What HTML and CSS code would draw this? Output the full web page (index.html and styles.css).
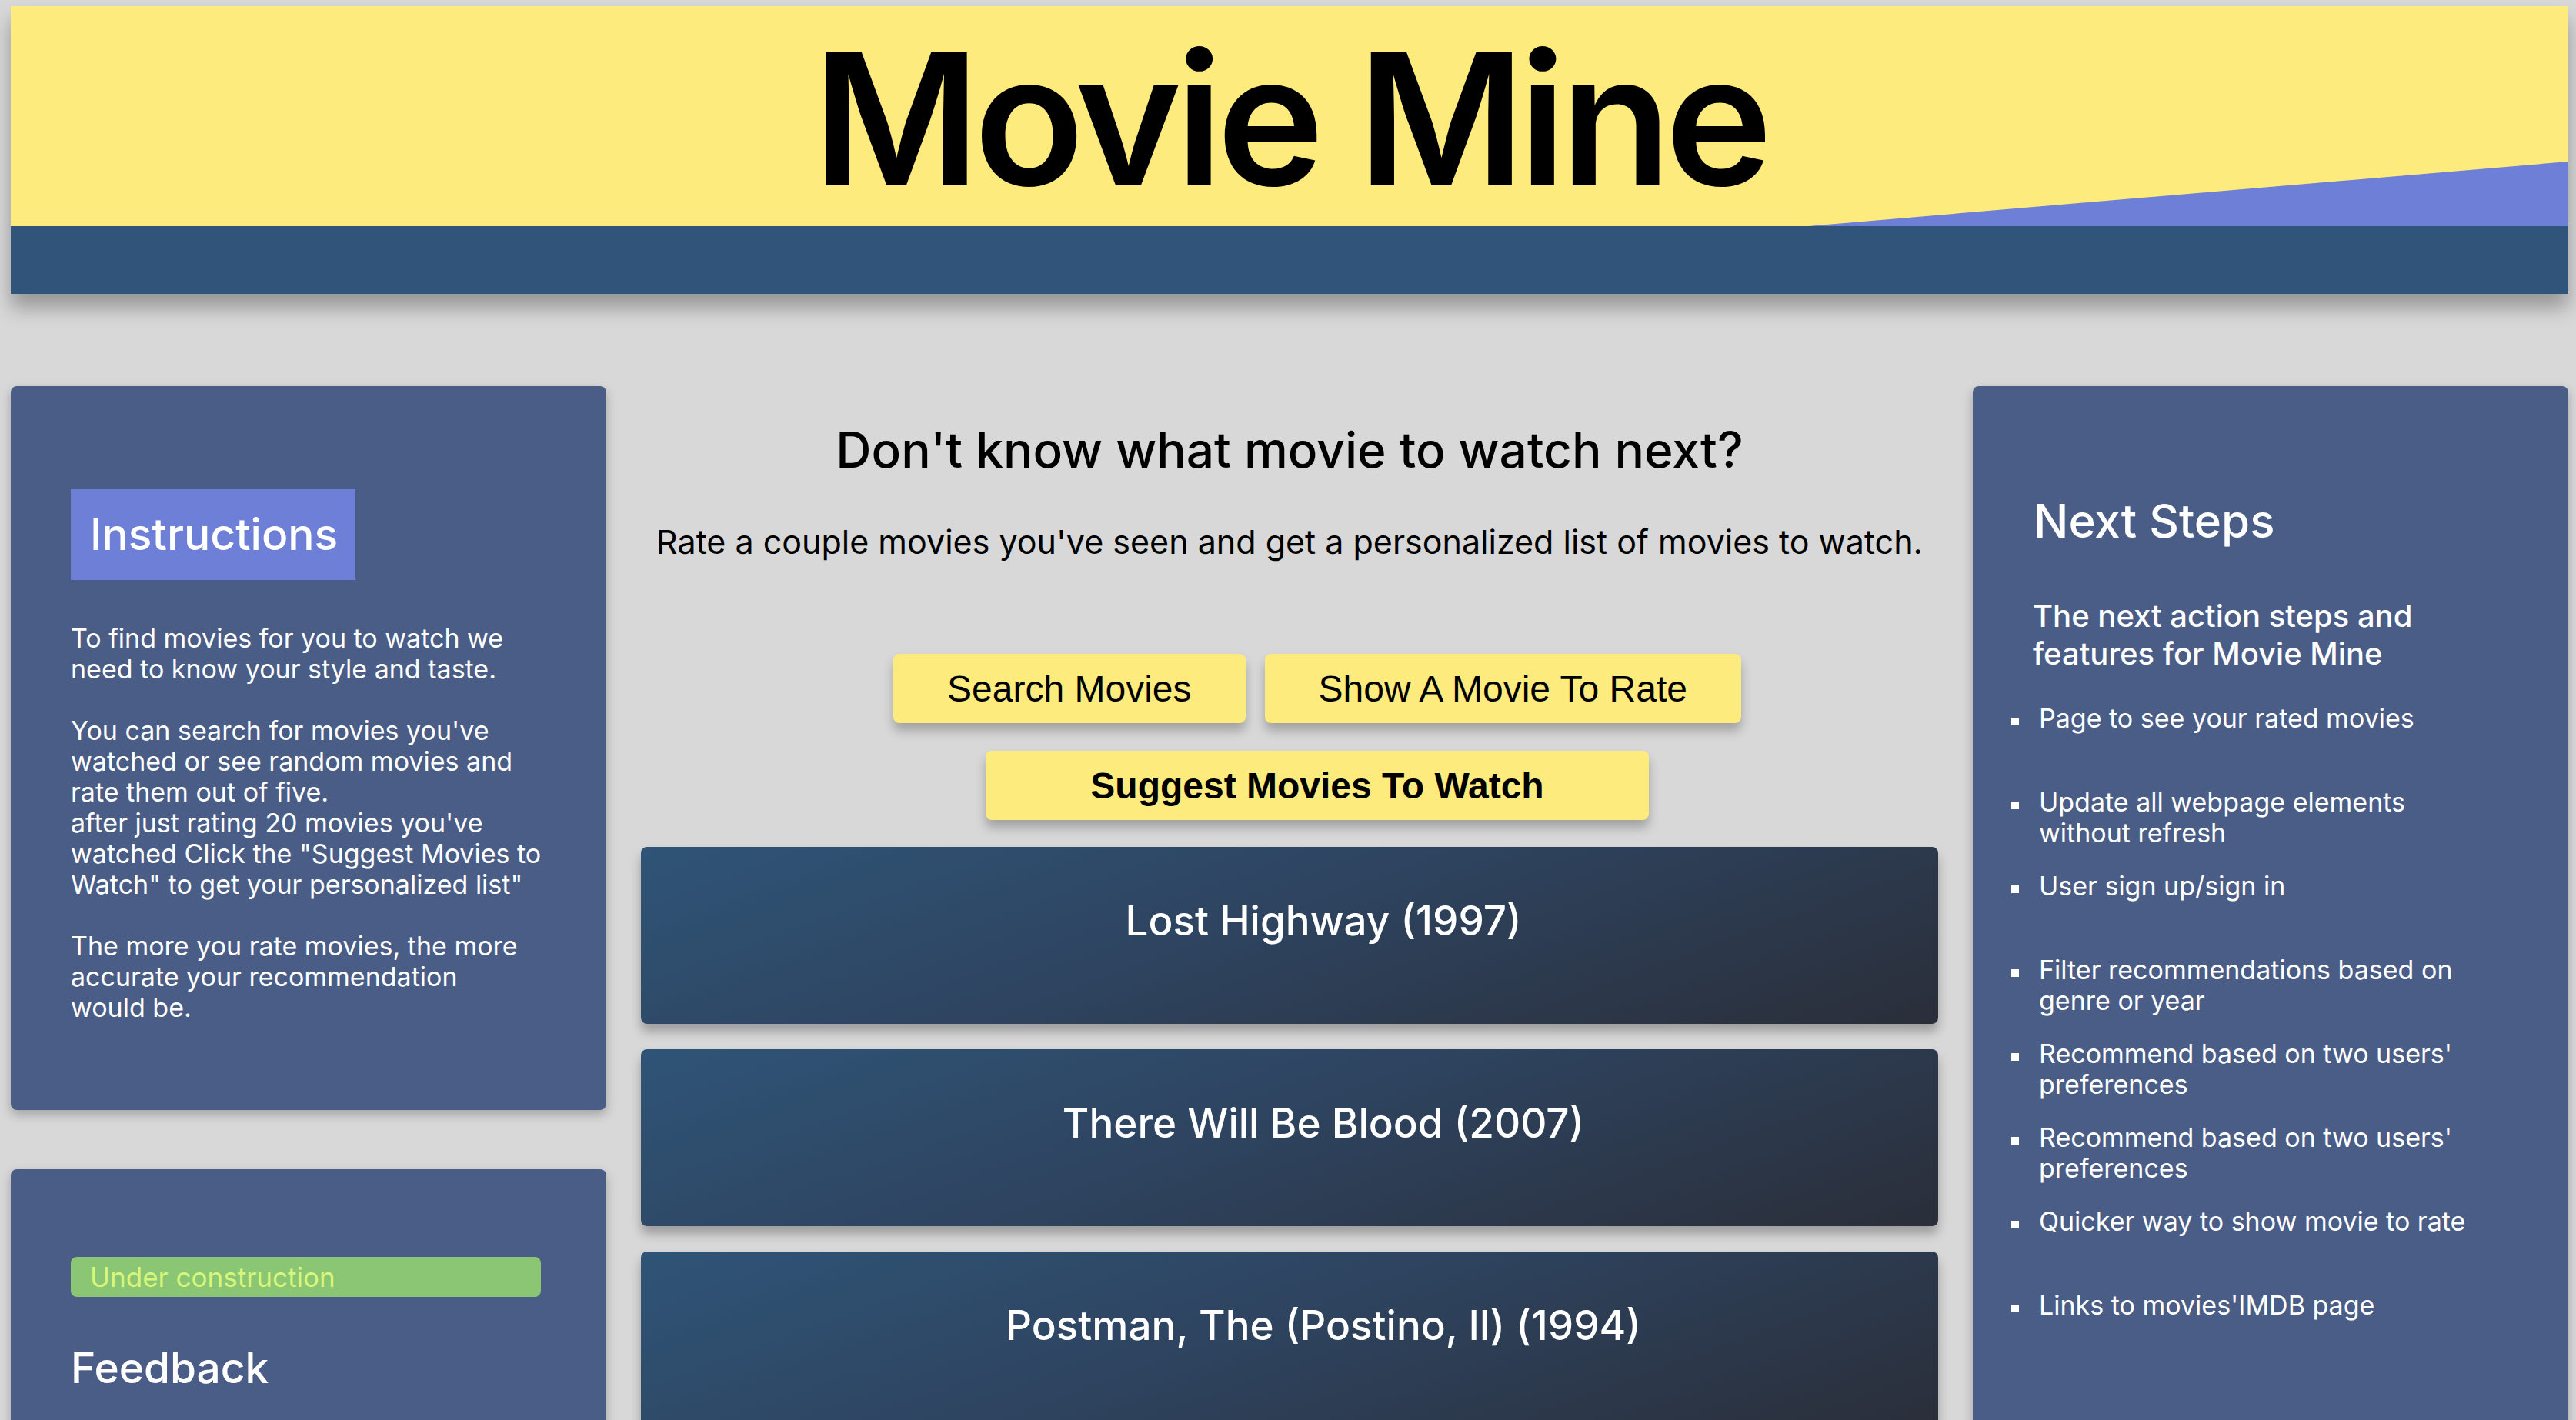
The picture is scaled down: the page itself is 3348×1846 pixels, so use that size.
FILE: index.html
```html
<!DOCTYPE html>
<html lang="en">
<head>
<meta charset="utf-8">
<title>Movie Mine</title>
<link rel="stylesheet" href="styles.css">
</head>
<body>
<div class="page">
  <header class="hero">
    <div class="hero-top">
      <h1 class="hero-title">Movie Mine</h1>
      <div class="hero-wedge"></div>
    </div>
    <div class="hero-band"></div>
  </header>

  <main class="layout">
    <aside class="side">
      <section class="card card-instructions">
        <h2 class="tag">Instructions</h2>
        <p class="card-text">To find movies for you to watch we need to know your style and taste.<br><br>You can search for movies you've watched or see random movies and rate them out of five.<br>after just rating 20 movies you've watched Click the "Suggest Movies to Watch" to get your personalized list"<br><br>The more you rate movies, the more accurate your recommendation<br>would be.</p>
      </section>
      <section class="card card-feedback">
        <div class="notice">Under construction</div>
        <h2 class="card-title">Feedback</h2>
      </section>
    </aside>

    <section class="center">
      <h2 class="lead-title">Don't know what movie to watch next?</h2>
      <p class="lead-text">Rate a couple movies you've seen and get a personalized list of movies to watch.</p>
      <div class="actions">
        <div class="action-row">
          <button class="btn">Search Movies</button>
          <button class="btn">Show A Movie To Rate</button>
        </div>
        <div class="action-row">
          <button class="btn btn-strong">Suggest Movies To Watch</button>
        </div>
      </div>
      <div class="movies">
        <div class="movie">Lost Highway (1997)</div>
        <div class="movie">There Will Be Blood (2007)</div>
        <div class="movie">Postman, The (Postino, Il) (1994)</div>
      </div>
    </section>

    <aside class="side">
      <section class="card card-steps">
        <h2 class="card-title steps-title">Next Steps</h2>
        <h3 class="steps-sub">The next action steps and features for Movie Mine</h3>
        <ul class="steps">
          <li>Page to see your rated movies</li>
          <li>Update all webpage elements without refresh</li>
          <li>User sign up/sign in</li>
          <li>Filter recommendations based on genre or year</li>
          <li>Recommend based on two users' preferences</li>
          <li>Recommend based on two users' preferences</li>
          <li>Quicker way to show movie to rate</li>
          <li>Links to movies'IMDB page</li>
        </ul>
      </section>
    </aside>
  </main>
</div>
</body>
</html>
```

FILE: styles.css
```css
* { box-sizing: border-box; }

body {
  margin: 0;
  background: #d8d8d8;
  font-family: Inter, "Noto Sans", sans-serif;
  color: #000;
}

.page {
  padding: 8px 10px 60px 14px;
}

.hero {
  box-shadow: 0 18px 24px rgba(0, 0, 0, 0.3);
}

.hero-top {
  position: relative;
  height: 286px;
  background: #feeb7e;
  display: flex;
  justify-content: center;
}

.hero-title {
  margin: 0;
  padding-top: 28px;
  font-size: 236px;
  font-weight: 600;
  line-height: 236px;
  letter-spacing: -8px;
  position: relative;
  z-index: 1;
}

.hero-wedge {
  position: absolute;
  right: 0;
  bottom: 0;
  width: 988px;
  height: 84px;
  background: #6d7fd6;
  clip-path: polygon(0 100%, 100% 0, 100% 100%);
}

.hero-band {
  height: 88px;
  background: #31557a;
}

.layout {
  display: grid;
  grid-template-columns: 774px 1fr 774px;
  gap: 45px;
  margin-top: 120px;
  align-items: start;
}

.side {
  display: flex;
  flex-direction: column;
  gap: 77px;
}

.card {
  background: #4a5d87;
  border-radius: 8px;
  color: #fff;
  box-shadow: 0 6px 14px rgba(0, 0, 0, 0.25);
}

.card-instructions {
  padding: 134px 78px 112px 78px;
  height: 941px;
}

.tag {
  display: inline-block;
  margin: 0;
  background: #6d7fd6;
  width: 370px;
  height: 118px;
  padding: 0 0 0 25px;
  font-size: 57px;
  font-weight: 500;
  line-height: 118px;
}

.card-text {
  margin: 56px 0 0 0;
  font-size: 34px;
  line-height: 40px;
}

.card-feedback {
  padding: 114px 78px 80px 78px;
  min-height: 420px;
}

.notice {
  background: #8ac674;
  color: #d8f77a;
  border-radius: 8px;
  height: 52px;
  width: 611px;
  padding-left: 25px;
  font-size: 35px;
  line-height: 52px;
}

.card-title {
  margin: 57px 0 0 0;
  font-size: 55px;
  font-weight: 500;
  line-height: 70px;
}

.center {
  display: flex;
  flex-direction: column;
  align-items: stretch;
}

.lead-title {
  margin: 45px 0 0 0;
  text-align: center;
  font-size: 64px;
  font-weight: 500;
  line-height: 76px;
}

.lead-text {
  margin: 56px 0 0 0;
  text-align: center;
  font-size: 43px;
  line-height: 50px;
}

.actions {
  margin-top: 121px;
  padding-left: 72px;
  display: flex;
  flex-direction: column;
  align-items: center;
  gap: 36px;
}

.action-row {
  display: flex;
  gap: 25px;
}

.btn {
  height: 90px;
  padding: 0 70px;
  border: none;
  border-radius: 8px;
  background: #feeb7e;
  color: #000;
  font-family: "Liberation Sans", Arial, sans-serif;
  font-size: 48px;
  box-shadow: 0 10px 14px rgba(0, 0, 0, 0.25);
}

.btn-strong {
  font-weight: 700;
  padding: 0 136px;
}

.movies {
  margin-top: 35px;
  display: flex;
  flex-direction: column;
  gap: 33px;
}

.movie {
  height: 230px;
  padding: 64px 0 0 88px;
  border-radius: 8px;
  background: linear-gradient(160deg, #2f5477 0%, #2e4460 45%, #2a2e39 100%);
  color: #fff;
  text-align: center;
  font-size: 53px;
  font-weight: 500;
  line-height: 64px;
  box-shadow: 0 10px 14px rgba(0, 0, 0, 0.28);
}

.card-steps {
  padding: 136px 100px 120px 0;
  min-height: 1500px;
}

.steps-title {
  margin: 0 0 0 79px;
  font-size: 60px;
  line-height: 78px;
}

.steps-sub {
  margin: 60px 0 0 78px;
  font-size: 40px;
  font-weight: 500;
  line-height: 49px;
}

.steps {
  list-style: none;
  margin: 40px 0 0 0;
  padding: 0 0 0 50px;
}

.steps li {
  display: flex;
  align-items: flex-start;
  gap: 26px;
  min-height: 80px;
  margin-bottom: 29px;
  font-size: 34px;
  line-height: 40px;
}

.steps li::before {
  content: "";
  flex: none;
  width: 10px;
  height: 10px;
  margin-top: 19px;
  background: #fff;
}
```
